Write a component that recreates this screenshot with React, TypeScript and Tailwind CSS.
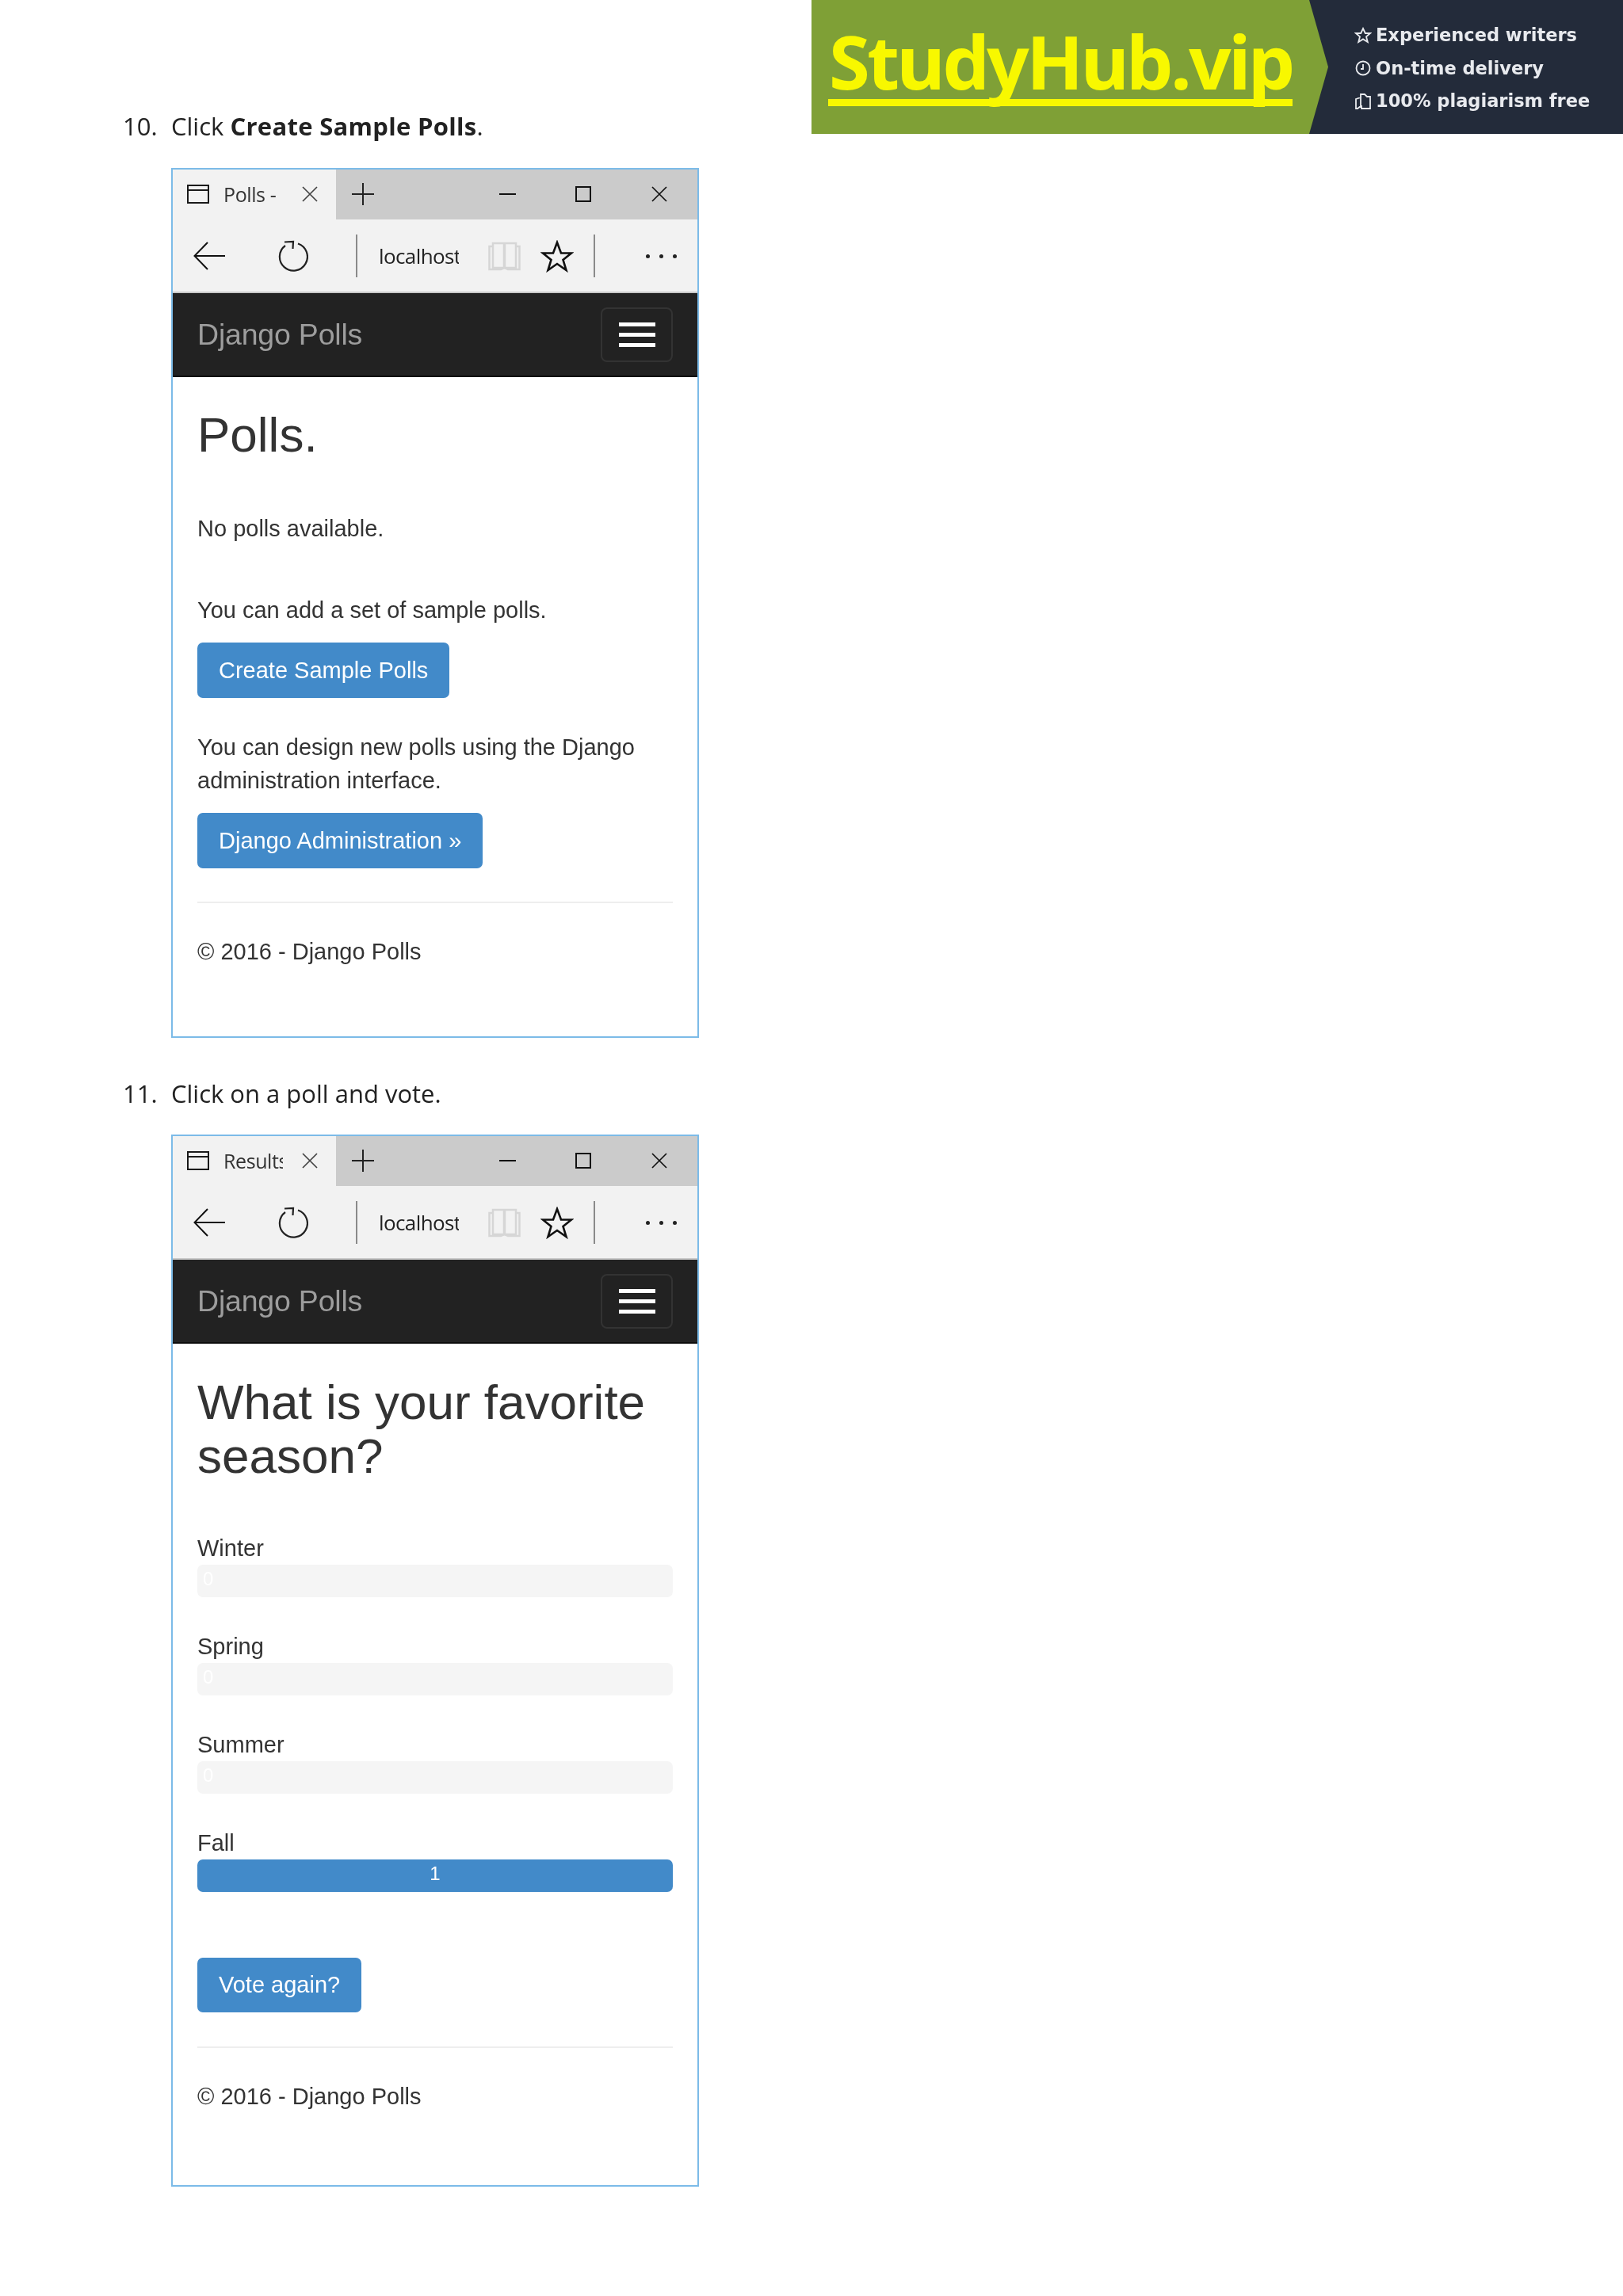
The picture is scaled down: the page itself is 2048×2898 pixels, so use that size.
import React from "react";

const arial = "font-['Liberation_Sans',Arial,sans-serif]";
const segoe = "font-['Open_Sans','Noto_Sans',sans-serif]";

function WindowIcon() {
  return (
    <svg width="28" height="24" viewBox="0 0 28 24" fill="none" stroke="#1a1a1a" strokeWidth="2" className="shrink-0">
      <rect x="1" y="1" width="26" height="22" />
      <path d="M1 7h26" />
    </svg>
  );
}

function Cross({ size, color = "#222" }: { size: number; color?: string }) {
  return (
    <svg width={size} height={size} viewBox="0 0 20 20" fill="none" stroke={color} strokeWidth="1.7" className="shrink-0">
      <path d="M1 1l18 18M19 1L1 19" />
    </svg>
  );
}

function TabStrip({ title }: { title: string }) {
  return (
    <div className="flex h-[63px] bg-[#cbcbcb]">
      <div className="flex w-[206px] items-center bg-[#f2f2f2] pb-[2px] pl-[18px]">
        <WindowIcon />
        <div className={`ml-[18px] w-[75px] overflow-hidden whitespace-nowrap text-[25px] leading-[30px] tracking-[-0.4px] text-[#333] ${segoe}`}>{title}</div>
        <div className="ml-[24px]">
          <Cross size={20} color="#444" />
        </div>
      </div>
      <div className="flex flex-1 items-center pb-[2px]">
        <svg width="28" height="28" viewBox="0 0 28 28" fill="none" stroke="#222" strokeWidth="2" className="ml-[20px] shrink-0">
          <path d="M0 14h28M14 0v28" />
        </svg>
        <div className="ml-[158px] h-[2px] w-[21px] bg-[#111]" />
        <div className="ml-[75px] h-[20px] w-[20px] border-2 border-[#111]" />
        <div className="ml-[76px]">
          <Cross size={20} color="#111" />
        </div>
      </div>
    </div>
  );
}

function Toolbar() {
  return (
    <div className="flex h-[93px] items-center border-b-2 border-[#c9c9c9] bg-[#f2f2f2] pl-[26px] pt-[1px]">
      <svg width="40" height="36" viewBox="0 0 40 36" fill="none" stroke="#111" strokeWidth="2" className="shrink-0">
        <path d="M40 18H2M18 1L1.500 18 18 35" />
      </svg>
      <svg width="38" height="40" viewBox="0 0 38 40" fill="none" stroke="#222" strokeWidth="2.2" className="ml-[67px] shrink-0">
        <path d="M25 4.500A17.500 17.500 0 1 1 9 7" />
        <path d="M8 2.500l11-0.500-0.500 9" />
      </svg>
      <div className="ml-[60px] h-[54px] w-[2px] bg-[#8a8a8a]" />
      <div className={`ml-[27px] w-[101px] overflow-hidden whitespace-nowrap text-[26px] leading-[32px] tracking-[-0.6px] text-[#222] ${segoe}`}>localhost</div>
      <svg width="41" height="38" viewBox="0 0 41 38" fill="none" stroke="#d6d6d6" strokeWidth="2.500" className="ml-[37px] shrink-0">
        <path d="M6 3h14v31H6zM21 3h14v31H21z" />
        <path d="M6 7H1.500v29H16l4.500-2 4.500 2h14.500V7H35" />
      </svg>
      <svg width="42" height="41" viewBox="0 0 42 41" fill="none" stroke="#111" strokeWidth="2.600" className="ml-[25px] shrink-0">
        <path d="M21 3l5 13.500h13L28.500 25l4 13L21 30l-11.500 8 4-13L3 16.500h13z" />
      </svg>
      <div className="ml-[25px] h-[54px] w-[2px] bg-[#8a8a8a]" />
      <div className="ml-[64px] flex gap-[12px]">
        <div className="h-[5px] w-[5px] rounded-full bg-[#222]" />
        <div className="h-[5px] w-[5px] rounded-full bg-[#222]" />
        <div className="h-[5px] w-[5px] rounded-full bg-[#222]" />
      </div>
    </div>
  );
}

function Navbar() {
  return (
    <div className="flex h-[106px] items-center justify-between border-b-2 border-[#0d0d0d] bg-[#222222] pl-[31px] pr-[31px]">
      <div className={`text-[37.5px] leading-[40px] tracking-[-0.2px] text-[#9d9d9d] ${arial}`}>Django Polls</div>
      <div className="flex h-[69px] w-[91px] flex-col items-center justify-center gap-[8px] rounded-[8px] border-2 border-[#333333]">
        <div className="h-[5px] w-[46px] bg-white" />
        <div className="h-[5px] w-[46px] bg-white" />
        <div className="h-[5px] w-[46px] bg-white" />
      </div>
    </div>
  );
}

function Btn({ children, h }: { children: React.ReactNode; h: string }) {
  return (
    <div className={`flex w-fit items-center rounded-[7px] bg-[#428ac9] px-[27px] pt-[1px] text-[29px] text-white ${h}`}>{children}</div>
  );
}

function Browser({ title, children }: { title: string; children: React.ReactNode }) {
  return (
    <div className="ml-[216px] w-[666px] border-2 border-[#7cbbe8] bg-white">
      <TabStrip title={title} />
      <Toolbar />
      <Navbar />
      <div className={`px-[31px] text-[#333333] ${arial}`}>{children}</div>
    </div>
  );
}

function Footer() {
  return <p className="mt-[40px] text-[29px] leading-[42px]">© 2016 - Django Polls</p>;
}

function Step({ n, children }: { n: string; children: React.ReactNode }) {
  return (
    <div className={`flex text-[31px] leading-[42px] text-[#222] ${segoe}`}>
      <span className="ml-[155px] w-[61px]">{n}</span>
      <span>{children}</span>
    </div>
  );
}

function Poll({ label, value, full }: { label: string; value: string; full?: boolean }) {
  return (
    <div className="mb-[39px]">
      <div className="pt-[2px] text-[29px] leading-[42px]">{label}</div>
      <div className={`h-[41px] rounded-[7px] text-[24px] leading-[36px] text-white ${full ? "bg-[#428ac9] text-center" : "bg-[#f5f5f5] pl-[7px]"}`}>{value}</div>
    </div>
  );
}

function Banner() {
  return (
    <div className="absolute right-0 top-0 flex h-[169px] w-[1024px] bg-[#232b3a]">
      <div
        className="h-full w-[652px] bg-[#7fa036] pl-[21px] pt-[29px]"
        style={{ clipPath: "polygon(0 0, 628px 0, 100% 50%, 628px 100%, 0 100%)" }}
      >
        <div className="w-[586px] overflow-visible whitespace-nowrap border-b-[9px] border-[#f8f800] pl-[1px] text-[94px] font-bold leading-[96px] tracking-[-3.5px] text-[#f8f800] font-['Noto_Sans',sans-serif]">StudyHub.vip</div>
      </div>
      <div className="ml-[33px] flex flex-col gap-[14.5px] pt-[31px] text-[22.5px] font-bold leading-[27px] text-[#e8eaee] font-['DejaVu_Sans',sans-serif]">
        <Perk icon="star" text="Experienced writers" />
        <Perk icon="clock" text="On-time delivery" />
        <Perk icon="copy" text="100% plagiarism free" />
      </div>
    </div>
  );
}

function Perk({ icon, text }: { icon: "star" | "clock" | "copy"; text: string }) {
  return (
    <div className="flex items-center gap-[5px]">
      <svg width="22" height="22" viewBox="0 0 22 22" fill="none" stroke="#e8eaee" strokeWidth="1.800" className="shrink-0">
        {icon === "star" && <path d="M11 2l2.800 6h6.200l-5 4.300 1.800 6.700-5.800-3.600L5.200 19 7 12.300 2 8h6.200z" />}
        {icon === "clock" && (
          <>
            <circle cx="11" cy="11" r="8.500" />
            <path d="M11 6v6H8" />
          </>
        )}
        {icon === "copy" && <path d="M8 7V2h5l3 3h4v15H9v-4M2 8l6-2v11l-4 3H2z" />}
      </svg>
      <span className="whitespace-nowrap">{text}</span>
    </div>
  );
}

export default function App() {
  return (
    <div className="relative h-[2898px] w-[2048px] overflow-hidden bg-white pt-[138px] blur-[0.5px]">
      <Banner />
      <Step n="10.">
        Click <b className="font-bold tracking-[0.3px]">Create Sample Polls</b>.
      </Step>
      <div className="mt-[32px]">
        <Browser title="Polls -">
          <h2 className="mt-[39px] text-[62px] leading-[68px]">Polls.</h2>
          <p className="mt-[63px] text-[29px] leading-[42px]">No polls available.</p>
          <p className="mt-[61px] text-[29px] leading-[42px]">You can add a set of sample polls.</p>
          <div className="mt-[20px]">
            <Btn h="h-[70px]">Create Sample Polls</Btn>
          </div>
          <p className="mt-[41px] text-[29px] leading-[42px]">
            You can design new polls using the Django
            <br />
            administration interface.
          </p>
          <div className="mt-[20px]">
            <Btn h="h-[70px]">Django Administration »</Btn>
          </div>
          <div className="mt-[42px] h-[2px] bg-[#eeeeee]" />
          <Footer />
          <div className="h-[86px]" />
        </Browser>
      </div>
      <div className="mt-[49px]">
        <Step n="11.">Click on a poll and vote.</Step>
      </div>
      <div className="mt-[31px]">
        <Browser title="Results">
          <h2 className="mt-[40px] text-[62px] leading-[68px]">
            What is your favorite
            <br />
            season?
          </h2>
          <div className="mt-[59px]">
            <Poll label="Winter" value="0" />
            <Poll label="Spring" value="0" />
            <Poll label="Summer" value="0" />
            <Poll label="Fall" value="1" full />
          </div>
          <div className="mt-[83px]">
            <Btn h="h-[69px]">Vote again?</Btn>
          </div>
          <div className="mt-[43px] h-[2px] bg-[#eeeeee]" />
          <Footer />
          <div className="h-[91px]" />
        </Browser>
      </div>
    </div>
  );
}
